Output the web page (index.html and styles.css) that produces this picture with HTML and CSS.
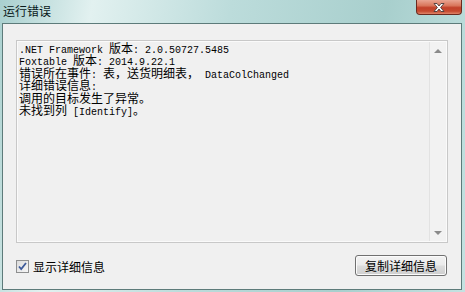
FILE: index.html
```html
<!DOCTYPE html>
<html lang="zh-CN">
<head>
    <meta charset="UTF-8">
    <title>运行错误</title>
    <link rel="stylesheet" href="styles.css">
</head>
<body>
    <div class="window">
        <div class="titlebar">
            <span class="title">运行错误</span>
            <button class="close" aria-label="关闭">
                <svg width="16" height="11" viewBox="0 0 16 11">
                    <path d="M3 1.5 L6 1.5 L8 4 L10 1.5 L13 1.5 L9.6 5.5 L13 9.5 L10 9.5 L8 7 L6 9.5 L3 9.5 L6.4 5.5 Z" fill="#ffffff" stroke="#4a3a3a" stroke-width="0.9" stroke-linejoin="round"/>
                </svg>
            </button>
        </div>
        <div class="client">
            <div class="textbox">
                <div class="text">
                    <div class="line"><span class="lat">.NET Framework </span>版本<span class="lat">: 2.0.50727.5485</span></div>
                    <div class="line"><span class="lat">Foxtable </span>版本<span class="lat">: 2014.9.22.1</span></div>
                    <div class="line">错误所在事件<span class="lat">: </span>表，送货明细表，<span class="lat"> DataColChanged</span></div>
                    <div class="line">详细错误信息<span class="lat">:</span></div>
                    <div class="line">调用的目标发生了异常。</div>
                    <div class="line">未找到列<span class="lat"> [Identify]</span>。</div>
                </div>
                <div class="scrollbar">
                    <span class="arrow up"></span>
                    <span class="arrow down"></span>
                </div>
            </div>
            <div class="footer">
                <label class="check">
                    <span class="box">
                        <svg width="11" height="11" viewBox="0 0 11 11">
                            <path d="M2 5.5 L4.2 8 L9 2" fill="none" stroke="#3d5a9a" stroke-width="1.8"/>
                        </svg>
                    </span>
                    显示详细信息
                </label>
                <button class="copy">复制详细信息</button>
            </div>
        </div>
    </div>
</body>
</html>
```

FILE: styles.css
```css
* {
    box-sizing: border-box;
    margin: 0;
    padding: 0;
}

body {
    width: 465px;
    height: 292px;
    overflow: hidden;
    font-family: "Noto Sans CJK SC", "Liberation Sans", sans-serif;
    font-size: 12px;
    color: #000;
}

.window {
    width: 465px;
    height: 292px;
    background: linear-gradient(100deg, #a9d0cf 0%, #e2f1f0 18%, #bcdcdb 45%, #a8cfcd 75%, #c4e2e1 100%);
    display: flex;
    flex-direction: column;
}

.titlebar {
    height: 23px;
    display: flex;
    align-items: flex-start;
    justify-content: space-between;
    padding-left: 3px;
    padding-right: 3px;
}

.title {
    font-size: 12px;
    line-height: 12px;
    margin-top: 5px;
    color: #0a1a1a;
}

.close {
    width: 46px;
    height: 15px;
    border: 1px solid #6b2a1f;
    border-top: none;
    border-radius: 0 0 4px 4px;
    background: linear-gradient(#e9a592 0%, #d9765c 40%, #c2412a 55%, #c64a30 80%, #e0866a 100%);
    display: flex;
    align-items: center;
    justify-content: center;
    padding-top: 1px;
}

.client {
    margin: 0 3px 2px 2px;
    flex: 1;
    background: #f0f0f0;
    border: 1px solid #5d7b7a;
    padding: 16px 13px 0 13px;
    display: flex;
    flex-direction: column;
}

.textbox {
    height: 203px;
    border: 1px solid #c8c8c8;
    box-shadow: inset 0 0 0 1px #fafafa;
    display: flex;
}

.text {
    flex: 1;
    padding: 1px 2px;
    font-size: 12px;
    white-space: nowrap;
}

.line {
    height: 12.4px;
    line-height: 12px;
}

.lat {
    font-family: "Liberation Mono", monospace;
    font-size: 10px;
    line-height: 10px;
    white-space: pre;
}

.scrollbar {
    width: 17px;
    margin: 1px 1px 1px 0;
    border-left: 1px solid #e2e2e2;
    background: #f2f2f2;
    display: flex;
    flex-direction: column;
    justify-content: space-between;
    align-items: center;
    padding: 7px 0 6px;
}

.arrow {
    width: 0;
    height: 0;
    border-left: 4px solid transparent;
    border-right: 4px solid transparent;
}

.arrow.up {
    border-bottom: 4px solid #8a8a8a;
}

.arrow.down {
    border-top: 4px solid #8a8a8a;
}

.footer {
    display: flex;
    justify-content: space-between;
    align-items: center;
    margin-top: 12px;
    padding-right: 1px;
}

.check {
    display: flex;
    align-items: center;
    gap: 4px;
    font-size: 12px;
    margin-top: 1px;
}

.box {
    width: 13px;
    height: 13px;
    border: 1px solid #8e8f8f;
    background: linear-gradient(135deg, #dcdcdc, #f6f6f6);
    display: flex;
    align-items: center;
    justify-content: center;
}

.copy {
    width: 92px;
    height: 21px;
    border: 1px solid #707070;
    border-radius: 3px;
    background: linear-gradient(#f2f2f2 0%, #ebebeb 48%, #dddddd 52%, #cfcfcf 100%);
    box-shadow: inset 0 0 0 1px #fbfbfb;
    font-family: inherit;
    font-size: 12px;
    color: #000;
}
```
